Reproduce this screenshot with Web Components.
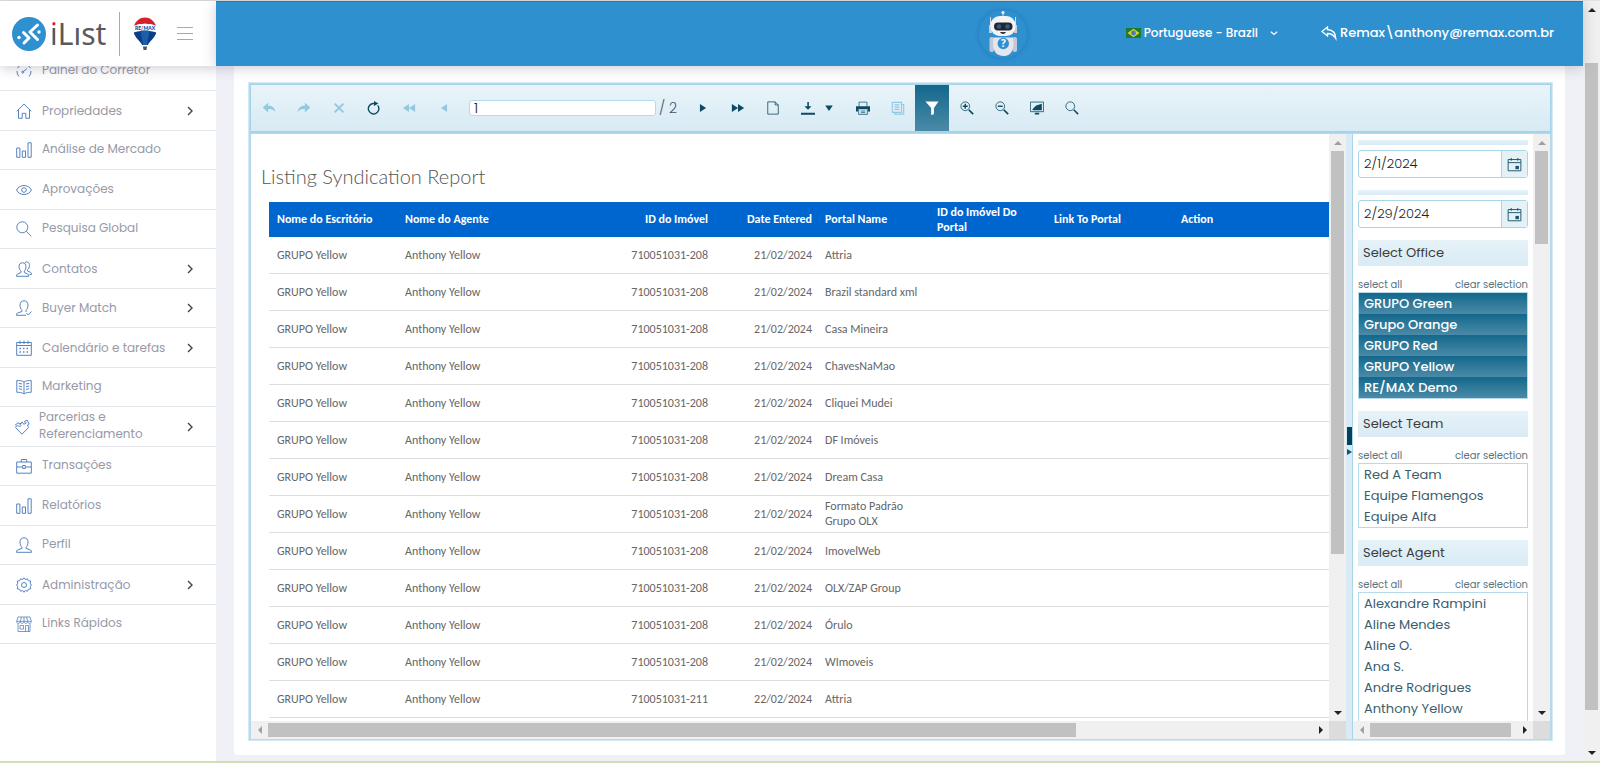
<!DOCTYPE html>
<html lang="pt-BR">
<head>
<meta charset="utf-8">
<title>iList - Listing Syndication Report</title>
<style>
    html, body {
        margin: 0;
        height: 100%;
    }
    body {
        font-family: Poppins, Inter, sans-serif;
        font-size: 13px;
        overflow: hidden;
        background: #f0f1f7;
    }
</style>
</head>
<body>
<ilist-app></ilist-app>
<script>
(() => {
    const define = (name, html, setup) => {
        const template = document.createElement('template');
        template.innerHTML = html;
        customElements.define(name, class extends HTMLElement {
            constructor() {
                super();
                this.attachShadow({ mode: 'open' });
                this.shadowRoot.appendChild(template.content.cloneNode(true));
            }
            connectedCallback() {
                if (setup && !this.ready) {
                    this.ready = true;
                    setup(this, this.shadowRoot);
                }
            }
        });
    };

    // 16x16 line icons, "currentColor" everywhere
    const icons = {
        gauge: '<path d="M3 13.5A7 7 0 0 1 1 8M1.600 5.200A7 7 0 0 1 4.500 2M6.500 1.200a7 7 0 0 1 3 0M11.500 2A7 7 0 0 1 14.400 5.200M15 8a7 7 0 0 1-2 5.500M7.500 8.500 11 5.500"/><circle cx="6.800" cy="9" r="1"/>',
        home: '<path d="M.8 8.300 8 1l7.200 7.300M2.500 7v8.300h3.700v-5h3.600v5h3.700V7"/>',
        bars: '<path d="M.7 6h3.200v9.300H.7zM6.300 9h3.200v6.300H6.300zM12 .8h3.200v14.500H12z"/>',
        eye: '<path d="M.5 8C3.500 2 12.500 2 15.500 8 12.500 14 3.500 14 .5 8z"/><circle cx="8" cy="8" r="2.300"/>',
        search: '<circle cx="6.300" cy="6.300" r="5.500"/><path d="m10.300 10.300 5 5"/>',
        user: '<path d="M8 .8c2.600 0 4 1.800 4 4.200S11 9.500 10 10.300v1.200l4.500 1.500c.8.400 1 1.200 1 2.300H.5c0-1.100.2-1.900 1-2.300L6 11.500v-1.200C5 9.500 4 7.400 4 5S5.400.8 8 .8z"/>',
        users: '<path d="M6.500 1.800c2.300 0 3.500 1.600 3.500 3.700S9.200 9.400 8.300 10v1.500l3.400 1.500c.8.400 1 1.200 1 2.300H.5c0-1.100.2-1.900 1-2.300L5 11.500V10C4 9.400 3 7.600 3 5.500s1.200-3.700 3.500-3.700z"/><path d="M9 1.500C12 0 13.500 2 13.500 4.500c0 2-1 3.500-2 4.200V10l3 1.300c.8.400 1 1.200 1 2.200h-2"/>',
        usercheck: '<path d="M10 12v-1.700c1-.8 2-2.900 2-5.300S10.600.8 8 .8 4 2.600 4 5s1 4.500 2 5.300v1.200L1.500 13c-.8.400-1 1.200-1 2.300H10M10.500 13l1.800 2 3.200-3.500"/>',
        calendar: '<path d="M.7 2.500h14.600v12.800H.7zM.7 5.500h14.600M4 .5v3.500M8 .5v3.500M12 .5v3.500"/><path stroke-dasharray="1.500 2" d="M3.500 8.500h9M3.500 12h9" stroke-width="1.500"/>',
        book: '<path d="M8 3C6 1.500 3 1.500.8 1.500v11.800C3 13.300 6 13.300 8 15c2-1.700 5-1.700 7.200-1.700V1.500C13 1.500 10 1.500 8 3zv12M2.800 4.300l3.200.7M2.800 7l3.200.7M2.800 9.700l3.200.7M13.200 4.300 10 5M13.200 7l-3.200.7M13.200 9.700l-3.200.7"/>',
        shake: '<path d="M.8 6.500 4 3.800l2.500 1L8 3.500M8 15.200 1.500 8.500l2-2.500 2 2 1.500-1.500L5.800 5l2.400-1.800L10 5.500l2-2M8 15.200l6.500-6.700L13.500 6l1.700-1L13 1l-2.500 1.500L12 5"/>',
        briefcase: '<path d="M.7 4h14.600v11.200H.7zM5.300 4V1.500h5.400V4M.7 9h6M9.300 9h6M6.700 7.500h2.600v3H6.700z"/>',
        gear: '<path d="M8 .7l1.400 1.900 2-.9.9 2 2.300.3-.3 2.300L15.400 8l-1.100 1.600.3 2.300-2.300.4-.9 2-2-.9L8 15.300l-1.400-1.900-2 .9-.9-2-2.300-.4.300-2.300L.6 8l1.100-1.700L1.400 4l2.300-.3.9-2 2 .9z"/><circle cx="8" cy="8" r="2.500"/>',
        shop: '<path stroke-width=".8" d="M2 1h12l1.300 4.500c0 2.500-3.600 2.500-3.700 0 0 2.500-3.600 2.500-3.600 0 0 2.500-3.600 2.500-3.700 0C4.200 8 .7 8 .7 5.500zM.7 5.300h14.600M5.500 1 4.300 5.500M8 1v4.500M10.500 1l1.200 4.500M2 7.500v8h12v-8M4 9.500h3.500V13H4zM9.500 15.500v-6h3v6"/>',
        right: '<path d="m6 4 4 4-4 4" stroke-width="1.400"/>',
        down: '<path d="m3 6 5 4.500L13 6" stroke-width="1.900"/>',
        reply: '<path d="M6.500 2 1 6.500 6.500 11V8.500c4 0 6 1 8.300 5 0-5-3-8.500-8.300-9z" stroke-width="1.300"/>',
        // toolbar
        undo: '<path class="f" d="M7 2v3.500c4.500 0 7.500 2 8.500 7.500-2-3-4.500-4-8.500-3.800V13L.8 7.500z"/>',
        redo: '<path class="f" d="M9 2v3.500C4.500 5.500 1.500 7.500.5 13c2-3 4.500-4 8.500-3.800V13l6.200-5.500z"/>',
        stop: '<path d="m3 3 10 10m0-10L3 13" stroke-width="2.200"/>',
        refresh: '<path d="M9 2.800H7.500a6 6 0 1 0 4.700 2.200" stroke-width="1.600"/><path class="f" d="M8 0v5.600L13 2.800z"/>',
        first: '<path class="f" d="M8 3.500v9L1 8zM15 3.500v9L8 8z"/>',
        prev: '<path class="f" d="M11.500 3.500v9L4.500 8z"/>',
        next: '<path class="f" d="M4.500 3.500v9l7-4.500z"/>',
        last: '<path class="f" d="M1 3.500v9L8 8zM8 3.500v9L15 8z"/>',
        page: '<path d="M2 1h8.500L14 4.500v10.500H2zM10.500 1v3.500H14" stroke-width=".9"/>',
        download: '<path class="f" d="M0 13.500h16v2.200H0zM7.200 1h1.800v5h3l-4 4-4-4h3.200z"/>',
        caret: '<path class="f" d="M3 4.500h10L8 12z"/>',
        print: '<path class="f" d="M0 6h16v6h-2.500v-2.500h-11V12H0z"/><path d="M3.500 6V1.300h9V6M3 10v5.300h10V10M5.500 11.500h5M5.500 13.300h5" stroke-width=".8"/>',
        copy: '<path d="M1.500 1.500h10.500v11.500H1.500zM12 4h2.500v11H4.500v-2M4 4.500h5.500M4 7h5.500M4 9.500h5.500" stroke-width="1.300"/>',
        filter: '<path class="f" d="M.5.500h15L10.200 8v7l-3.200.9V8z"/>',
        zoomin: '<circle cx="6" cy="6" r="5" stroke-width=".9"/><path d="M3.200 6h5.600M6 3.200v5.600" stroke-width="1.600"/><path d="m10 10 5 5" stroke-width="2"/>',
        zoomout: '<circle cx="6" cy="6" r="5" stroke-width=".9"/><path d="M3.200 6h5.600" stroke-width="1.600"/><path d="m10 10 5 5" stroke-width="2"/>',
        screen: '<path d="M.5 1.200h15v11H.5z" stroke-width=".9"/><path class="f" d="M3 10.500V9l4-4 6.500-2v7.500zM5.500 13.500h5v1.800h-5z"/>',
        find: '<circle cx="6" cy="6" r="5" stroke-width=".9"/><path d="m10 10 5 5" stroke-width="1.700"/>',
        date: '<path d="M1.200 2.700h13.600v12H1.200zM1.200 6h13.600M4.500 1v3M11.500 1v3"/><path class="f" d="M9 9.500h3.700v3.500H9z"/>'
    };

    define('ui-icon', `
        <style>
            :host {
                display: inline-flex;
                width: 16px;
                height: 16px;
                flex: none;
            }
            svg {
                width: 100%;
                height: 100%;
                fill: none;
                stroke: currentColor;
                stroke-width: 1;
            }
            .f {
                fill: currentColor;
                stroke: none;
            }
        </style>
        <svg viewBox="0 0 16 16" aria-hidden="true"></svg>
    `, (host, root) => {
        root.querySelector('svg').innerHTML = icons[host.getAttribute('name')] || '';
    });

    // before / thumb / after are flex weights along the track
    define('scroll-bar', `
        <style>
            :host {
                display: flex;
                flex-direction: column;
                background: #f0f0f0;
                width: 17px;
                box-sizing: border-box;
            }
            :host([horizontal]) {
                flex-direction: row;
                width: auto;
                height: 18px;
            }
            i {
                flex: none;
                width: 17px;
                height: 17px;
                display: flex;
                align-items: center;
                justify-content: center;
            }
            i::before {
                content: '';
                border: 4px solid transparent;
                border-top-width: 0;
                border-bottom: 4px solid #222;
            }
            i:last-of-type::before { transform: rotate(180deg); }
            :host([horizontal]) i:first-of-type::before { transform: rotate(-90deg); }
            :host([horizontal]) i:last-of-type::before { transform: rotate(90deg); }
            :host([start]) i:first-of-type::before { border-bottom-color: #a0a0a0; }
            .thumb {
                background: #c1c1c1;
                margin: 0 2px;
            }
            :host([horizontal]) .thumb { margin: 2px 0; }
        </style>
        <i></i>
        <div class="before"></div>
        <div class="thumb"></div>
        <div class="after"></div>
        <i></i>
    `, (host, root) => {
        ['before', 'thumb', 'after'].forEach(part => {
            root.querySelector('.' + part).style.flex = `${host.getAttribute(part) || 0} 0 0`;
        });
    });

    define('app-brand', `
        <style>
            :host {
                display: flex;
                align-items: center;
                background: #fff;
                padding: 0 12px;
            }
            .mark {
                width: 34px;
                height: 34px;
            }
            .name {
                font-family: "Noto Sans", sans-serif;
                font-size: 30px;
                line-height: 40px;
                color: #595959;
                margin-left: 4px;
                width: 60px;
            }
            .name span {
                background: linear-gradient(#e11b22 14px, #595959 14px);
                -webkit-background-clip: text;
                background-clip: text;
                color: transparent;
            }
            .rule {
                width: 1px;
                height: 44px;
                background: #aaa;
                margin: 0 13px 0 9px;
            }
            .balloon {
                width: 24px;
                height: 33px;
            }
            button {
                border: 0;
                background: none;
                padding: 0;
                margin-left: 20px;
                width: 16px;
                height: 13px;
                border-top: 1px solid #a5a9b2;
                border-bottom: 1px solid #a5a9b2;
                display: flex;
                align-items: center;
            }
            button::before {
                content: '';
                width: 16px;
                height: 1px;
                background: #a5a9b2;
            }
        </style>
        <svg class="mark" viewBox="0 0 34 34" aria-hidden="true">
            <circle cx="17" cy="17" r="17" fill="#2f90d0"/>
            <g fill="none" stroke="#fff" stroke-width="3" stroke-linecap="round" stroke-linejoin="round">
                <path d="m11.500 15.500 5.500 5.500-5 5M25.500 8 18 15l7.500 7.500"/>
            </g>
            <circle cx="7" cy="20.500" r="1.700" fill="#fff"/>
            <circle cx="27" cy="15" r="1.700" fill="#fff"/>
        </svg>
        <div class="name"><span>i</span>Lıst</div>
        <div class="rule"></div>
        <svg class="balloon" viewBox="0 0 24 33" role="img" aria-label="RE/MAX">
            <path fill="#d8202c" d="M1 9C3 3.500 7 .5 12 .5s9 3 11 8.500C17 6 7 6 1 9z"/>
            <path fill="#fff" d="M1 9C7 6 17 6 23 9v6H1z"/>
            <path fill="#0a3f87" d="M.8 15.500C7 13 17 13 23.200 15.500 22.500 20 17 24 14.800 28H9.200C7 24 1.500 20 .8 15.500z"/>
            <path fill="#1c5ea8" d="M7.500 14c3-.6 6-.6 9 0L14 28h-4z"/>
            <path fill="#555" d="M10 29.500h4L13.500 33h-3z"/>
            <text x="12" y="12.500" text-anchor="middle" font-family="Lato" font-size="5" font-weight="900" fill="#0a4c9c">RE<tspan fill="#d8202c">/</tspan>MAX</text>
        </svg>
        <button aria-label="Menu"></button>
    `);

    define('app-header', `
        <style>
            :host {
                display: flex;
                align-items: center;
                background: #2f90d0;
                border-top: 1px solid #0a84cd;
                box-sizing: border-box;
                color: #fff;
                font-weight: 500;
                padding-right: 29px;
                box-shadow: 0 2px 12px rgba(60, 60, 90, .25);
            }
            .bot {
                margin-left: auto;
                margin-right: 99px;
                width: 48px;
                height: 48px;
                border-radius: 50%;
                background: #2f90d0;
                box-shadow: 0 0 5px rgba(0, 50, 100, .25);
                overflow: visible;
            }
            button, a {
                display: flex;
                align-items: center;
                color: inherit;
                font: inherit;
                background: none;
                border: 0;
                padding: 0 0 2px;
                text-decoration: none;
                white-space: nowrap;
            }
            button { margin-right: 42px; font-size: 12px; }
            .flag { width: 15px; height: 10px; margin-right: 3px; }
            button ui-icon { width: 10px; margin-left: 11px; }
            a ui-icon { margin-right: 3px; }
        </style>
        <svg class="bot" viewBox="0 0 48 48" role="img" aria-label="Assistente">
            <g stroke="#d4dbe8" stroke-width="1"><path d="M24 2v6M11.500 7v10M36.500 7v10"/></g>
            <circle cx="24" cy="2.500" r="1.500" fill="#f4f4f8"/>
            <path fill="#c9ccd8" d="M10 15h3v8h-3zM35 15h3v8h-3z"/>
            <rect x="11.500" y="6" width="25" height="20" rx="9" fill="#f4f4f8"/>
            <rect x="15" y="12.500" width="18.500" height="8" rx="4" fill="#23262f"/>
            <circle cx="20" cy="16.500" r="2.300" fill="#2c5d86"/>
            <circle cx="28.500" cy="16.500" r="2.300" fill="#2c5d86"/>
            <path d="M21 22h6c-1 2.500-5 2.500-6 0z" fill="#333"/>
            <rect x="10.500" y="27" width="4.500" height="15" rx="2" fill="#c3c7d6"/>
            <rect x="33.500" y="27" width="4.500" height="15" rx="2" fill="#c3c7d6"/>
            <path d="M14.500 27.500h19.500c1 8 1 18.500-9.700 18.500-11-.5-11-11.500-9.800-18.500z" fill="#e4e6ee"/>
            <circle cx="24.300" cy="33.500" r="5.700" fill="#2f90d0"/>
            <text x="24.300" y="37.200" text-anchor="middle" font-family="Open Sans" font-weight="700" font-size="10" fill="#fff">?</text>
        </svg>
        <button>
            <svg class="flag" viewBox="0 0 15 10" aria-hidden="true">
                <path fill="#1e7a2f" d="M0 0h15v10H0z"/>
                <path fill="#d8d42c" d="m7.500 .800 6 4.200-6 4.200-6-4.200z"/>
                <circle cx="7.500" cy="5" r="2.400" fill="#5078c0"/>
            </svg>
            Portuguese - Brazil
            <ui-icon name="down"></ui-icon>
        </button>
        <a href="#"><ui-icon name="reply"></ui-icon>Remax\\anthony@remax.com.br</a>
    `);

    define('nav-item', `
        <style>
            :host {
                display: block;
                height: 39px;
                box-sizing: border-box;
                border-bottom: 1px solid #e4e5ea;
            }
            :host(:nth-child(even)) { height: 40px; }
            a {
                display: flex;
                align-items: center;
                height: 100%;
                padding: 0 18px 0 16px;
                color: #9799a8;
                font-size: 12px;
                line-height: 17px;
                text-decoration: none;
            }
            .icon { color: #5583bf; }
            .label { flex: 1; padding: 0 0 3px 10px; }
            :host([more]) .label { padding-bottom: 1px; }
            :host([wrap]) a { padding-left: 14px; }
            :host([wrap]) .label { padding: 0 20px 3px 9px; }
            .more { color: #444; display: none; }
            :host([more]) .more { display: inline-flex; }
        </style>
        <a href="#">
            <span class="label"><slot></slot></span>
            <ui-icon class="more" name="right"></ui-icon>
        </a>
    `, (host, root) => {
        const icon = document.createElement('ui-icon');
        icon.className = 'icon';
        icon.setAttribute('name', host.getAttribute('icon'));
        root.querySelector('a').prepend(icon);
    });

    define('side-nav', `
        <style>
            :host {
                display: block;
                background: #fff;
                min-height: 0;
            }
            /* list is scrolled a little under the header */
            nav { margin-top: -14px; }
        </style>
        <nav>
            <nav-item icon="gauge">Painel do Corretor</nav-item>
            <nav-item icon="home" more>Propriedades</nav-item>
            <nav-item icon="bars">Análise de Mercado</nav-item>
            <nav-item icon="eye">Aprovações</nav-item>
            <nav-item icon="search">Pesquisa Global</nav-item>
            <nav-item icon="users" more>Contatos</nav-item>
            <nav-item icon="usercheck" more>Buyer Match</nav-item>
            <nav-item icon="calendar" more>Calendário e tarefas</nav-item>
            <nav-item icon="book">Marketing</nav-item>
            <nav-item icon="shake" more wrap>Parcerias e Referenciamento</nav-item>
            <nav-item icon="briefcase">Transações</nav-item>
            <nav-item icon="bars">Relatórios</nav-item>
            <nav-item icon="user">Perfil</nav-item>
            <nav-item icon="gear" more>Administração</nav-item>
            <nav-item icon="shop">Links Rápidos</nav-item>
        </nav>
    `);

    define('report-toolbar', `
        <style>
            :host {
                display: flex;
                align-items: stretch;
                height: 49px;
                box-sizing: border-box;
                background: linear-gradient(#e9f4f9, #d8eaf4);
                border: 1px solid #a5d3e8;
                border-bottom-width: 2px;
                color: #0d4a63;
            }
            button {
                width: 35px;
                border: 0;
                padding: 0;
                background: none;
                color: inherit;
                display: flex;
                align-items: center;
                justify-content: center;
            }
            button:disabled { color: #93c8e1; }
            button ui-icon { width: 14px; height: 14px; }
            .split { width: 55px; gap: 8px; }
            .split ui-icon:last-child { width: 12px; }
            .on {
                width: 34px;
                background: linear-gradient(#13688c, #4b8aa7);
                color: #fff;
            }
            label {
                display: flex;
                align-items: center;
                gap: 3px;
                padding: 0 8px;
                color: #456;
                font-size: 14px;
                font-weight: 300;
            }
            input {
                width: 187px;
                height: 16px;
                box-sizing: border-box;
                border: 1px solid #b5daea;
                border-radius: 3px;
                padding: 0 4px;
                font: inherit;
                color: #222;
                background: #fff;
            }
        </style>
        <button disabled aria-label="Back"><ui-icon name="undo"></ui-icon></button>
        <button disabled aria-label="Forward"><ui-icon name="redo"></ui-icon></button>
        <button disabled aria-label="Stop"><ui-icon name="stop"></ui-icon></button>
        <button aria-label="Refresh"><ui-icon name="refresh"></ui-icon></button>
        <button disabled aria-label="First page"><ui-icon name="first"></ui-icon></button>
        <button disabled aria-label="Previous page"><ui-icon name="prev"></ui-icon></button>
        <label><input value="1" aria-label="Page"><span>/ 2</span></label>
        <button aria-label="Next page"><ui-icon name="next"></ui-icon></button>
        <button aria-label="Last page"><ui-icon name="last"></ui-icon></button>
        <button aria-label="Page setup"><ui-icon name="page"></ui-icon></button>
        <button class="split" aria-label="Export"><ui-icon name="download"></ui-icon><ui-icon name="caret"></ui-icon></button>
        <button aria-label="Print"><ui-icon name="print"></ui-icon></button>
        <button disabled aria-label="Document map"><ui-icon name="copy"></ui-icon></button>
        <button class="on" aria-label="Parameters"><ui-icon name="filter"></ui-icon></button>
        <button aria-label="Zoom in"><ui-icon name="zoomin"></ui-icon></button>
        <button aria-label="Zoom out"><ui-icon name="zoomout"></ui-icon></button>
        <button aria-label="Full page"><ui-icon name="screen"></ui-icon></button>
        <button aria-label="Search"><ui-icon name="find"></ui-icon></button>
    `);

    const portals = ['Attria', 'Brazil standard xml', 'Casa Mineira', 'ChavesNaMao', 'Cliquei Mudei', 'DF Imóveis',
        'Dream Casa', 'Formato Padrão Grupo OLX', 'ImovelWeb', 'OLX/ZAP Group', 'Órulo', 'WImoveis'];
    const listings = portals.map(portal => ({ id: '710051031-208', date: '21/02/2024', portal }));
    listings.push({ id: '710051031-211', date: '22/02/2024', portal: 'Attria' });

    define('report-page', `
        <style>
            :host {
                display: block;
                overflow: hidden;
                background: #fff;
                font-family: Carlito, Lato, sans-serif;
                font-size: 12px;
                color: #666;
            }
            h1 {
                margin: 28px 0 12px 10px;
                font-family: Lato, sans-serif;
                font-size: 20px;
                line-height: 28px;
                font-weight: 300;
                color: #555;
            }
            table {
                margin-left: 18px;
                width: 1360px;
                table-layout: fixed;
                border-collapse: separate;
                border-spacing: 0;
                line-height: 15px;
            }
            th, td {
                box-sizing: border-box;
                padding: 0 8px;
                text-align: left;
            }
            th {
                height: 35px;
                background: #0066cf;
                color: #fff;
                font-weight: 700;
            }
            td {
                height: 37px;
                border-bottom: 1px solid #dedede;
            }
            .end { text-align: right; padding-right: 5px; }
        </style>
        <h1>Listing Syndication Report</h1>
        <table>
            <colgroup>
                <col style="width: 128px"><col style="width: 208px"><col style="width: 108px"><col style="width: 104px">
                <col style="width: 112px"><col style="width: 117px"><col style="width: 127px"><col>
            </colgroup>
            <thead>
                <tr>
                    <th>Nome do Escritório</th>
                    <th>Nome do Agente</th>
                    <th class="end">ID do Imóvel</th>
                    <th class="end">Date Entered</th>
                    <th>Portal Name</th>
                    <th>ID do Imóvel Do Portal</th>
                    <th>Link To Portal</th>
                    <th>Action</th>
                </tr>
            </thead>
            <tbody></tbody>
        </table>
    `, (host, root) => {
        root.querySelector('tbody').innerHTML = listings.map(row => `
            <tr>
                <td>GRUPO Yellow</td>
                <td>Anthony Yellow</td>
                <td class="end">${row.id}</td>
                <td class="end">${row.date}</td>
                <td>${row.portal}</td>
                <td></td>
                <td></td>
                <td></td>
            </tr>`).join('');
    });

    define('date-filter', `
        <style>
            :host { display: block; }
            .strip {
                height: 5px;
                background: linear-gradient(#e6f2f8, #d9ebf5);
                margin-bottom: 5px;
            }
            .field {
                display: flex;
                height: 28px;
                box-sizing: border-box;
                border: 1px solid #a9d5e8;
                border-radius: 3px;
                background: #fff;
            }
            input {
                flex: 1;
                min-width: 0;
                border: 0;
                padding: 0 5px;
                font: inherit;
                font-weight: 300;
                color: #222;
                background: none;
            }
            button {
                width: 26px;
                border: 0;
                border-left: 1px solid #a9d5e8;
                padding: 0;
                background: #e4f1f7;
                color: #1b536b;
                display: flex;
                align-items: center;
                justify-content: center;
            }
            ui-icon { width: 15px; height: 15px; }
        </style>
        <div class="strip"></div>
        <div class="field">
            <input type="text">
            <button aria-label="Calendar"><ui-icon name="date"></ui-icon></button>
        </div>
    `, (host, root) => {
        const input = root.querySelector('input');
        input.value = host.getAttribute('value');
        input.setAttribute('aria-label', host.getAttribute('label'));
    });

    define('list-filter', `
        <style>
            :host { display: block; color: #3a5d6d; }
            h2 {
                margin: 0;
                padding: 0 5px;
                font-size: 13px;
                line-height: 26px;
                font-weight: 400;
                color: #3c3c3c;
                background: linear-gradient(#e6f2f8, #d9ebf5);
            }
            .links {
                display: flex;
                justify-content: space-between;
                padding-top: 11px;
                font-size: 10px;
                line-height: 15px;
            }
            a { color: #5a7480; text-decoration: none; }
            ul {
                list-style: none;
                margin: 0;
                padding: 0;
                border: 1px solid #b5daea;
            }
            ::slotted(li) {
                padding: 0 5px;
                line-height: 21px;
            }
            ::slotted(li[aria-selected]) {
                background: linear-gradient(#13688c, #4b8aa7);
                color: #fff;
                font-weight: 500;
            }
        </style>
        <h2></h2>
        <div class="links"><a href="#">select all</a><a href="#">clear selection</a></div>
        <ul role="listbox" aria-multiselectable="true"><slot></slot></ul>
    `, (host, root) => {
        root.querySelector('h2').textContent = host.getAttribute('label');
        root.querySelector('ul').setAttribute('aria-label', host.getAttribute('label'));
    });

    define('filter-panel', `
        <style>
            :host {
                display: flex;
                flex-direction: column;
                gap: 12px;
                overflow: hidden;
                box-sizing: border-box;
                padding: 6px 5px 0;
                background: #fff;
            }
            list-filter, date-filter { flex: none; }
        </style>
        <date-filter label="Start date" value="2/1/2024"></date-filter>
        <date-filter label="End date" value="2/29/2024"></date-filter>
        <list-filter label="Select Office">
            <li role="option" aria-selected="true">GRUPO Green</li>
            <li role="option" aria-selected="true">Grupo Orange</li>
            <li role="option" aria-selected="true">GRUPO Red</li>
            <li role="option" aria-selected="true">GRUPO Yellow</li>
            <li role="option" aria-selected="true">RE/MAX Demo</li>
        </list-filter>
        <list-filter label="Select Team">
            <li role="option">Red A Team</li>
            <li role="option">Equipe Flamengos</li>
            <li role="option">Equipe Alfa</li>
        </list-filter>
        <list-filter label="Select Agent">
            <li role="option">Alexandre Rampini</li>
            <li role="option">Aline Mendes</li>
            <li role="option">Aline O.</li>
            <li role="option">Ana S.</li>
            <li role="option">Andre Rodrigues</li>
            <li role="option">Anthony Yellow</li>
            <li role="option">&nbsp;</li>
        </list-filter>
    `);

    // content pane with both scroll bars around it
    define('scroll-pane', `
        <style>
            :host {
                display: grid;
                grid-template: minmax(0, 1fr) 18px / minmax(0, 1fr) 17px;
                min-width: 0;
                min-height: 0;
            }
            .corner { background: #dcdcdc; }
            ::slotted(*) { min-height: 0; }
        </style>
        <slot></slot>
        <slot name="vertical"></slot>
        <slot name="horizontal"></slot>
        <div class="corner"></div>
    `);

    define('report-viewer', `
        <style>
            :host {
                display: grid;
                grid-template-rows: auto minmax(0, 1fr);
                min-height: 0;
                border: 1px solid #b5daea;
                outline: 1px solid #d4e9f3;
            }
            .body {
                display: grid;
                grid-template: minmax(0, 1fr) / minmax(0, 1fr) 7px 197px;
                min-height: 0;
                border: 1px solid #b5daea;
                border-bottom: 0;
            }
            .split {
                background: #d9eaf4;
                border-right: 1px solid #a9d5e8;
                display: flex;
                flex-direction: column;
                align-items: center;
                justify-content: center;
                gap: 4px;
                padding-top: 8px;
            }
            .split::before {
                content: '';
                width: 5px;
                height: 18px;
                background: #00435f;
            }
            .split::after {
                content: '';
                border: 3px solid transparent;
                border-left: 5px solid #0b5273;
                border-right: 0;
            }
        </style>
        <report-toolbar></report-toolbar>
        <div class="body">
            <scroll-pane>
                <report-page></report-page>
                <scroll-bar slot="vertical" start thumb="403" after="150"></scroll-bar>
                <scroll-bar slot="horizontal" horizontal start thumb="808" after="236"></scroll-bar>
            </scroll-pane>
            <div class="split"></div>
            <scroll-pane>
                <filter-panel></filter-panel>
                <scroll-bar slot="vertical" start thumb="93" after="460"></scroll-bar>
                <scroll-bar slot="horizontal" horizontal start thumb="141" after="5"></scroll-bar>
            </scroll-pane>
        </div>
    `);

    define('ilist-app', `
        <style>
            :host {
                display: grid;
                grid-template: 65px minmax(0, 1fr) / 216px minmax(0, 1fr) 17px;
                height: 100vh;
                box-sizing: border-box;
                border-top: 1px solid #e2e2e2;
                border-bottom: 2px solid #cfe0b4;
            }
            app-brand, app-header { z-index: 1; }
            app-brand { box-shadow: 0 2px 12px rgba(60, 60, 90, .25); }
            app-header { grid-column: 2; }
            scroll-bar { grid-area: 1 / 3 / 3; }
            side-nav { grid-area: 2 / 1; }
            main {
                grid-area: 2 / 2;
                display: grid;
                min-height: 0;
                padding: 0 18px 6px;
                background: #f0f1f7;
            }
            .card {
                display: grid;
                min-height: 0;
                padding: 17px 13px 15px 15px;
                background: #fff;
                border-radius: 0 0 3px 3px;
            }
        </style>
        <app-brand></app-brand>
        <app-header></app-header>
        <side-nav></side-nav>
        <main><div class="card"><report-viewer></report-viewer></div></main>
        <scroll-bar before="45" thumb="647" after="34"></scroll-bar>
    `);
})();
</script>
</body>
</html>
